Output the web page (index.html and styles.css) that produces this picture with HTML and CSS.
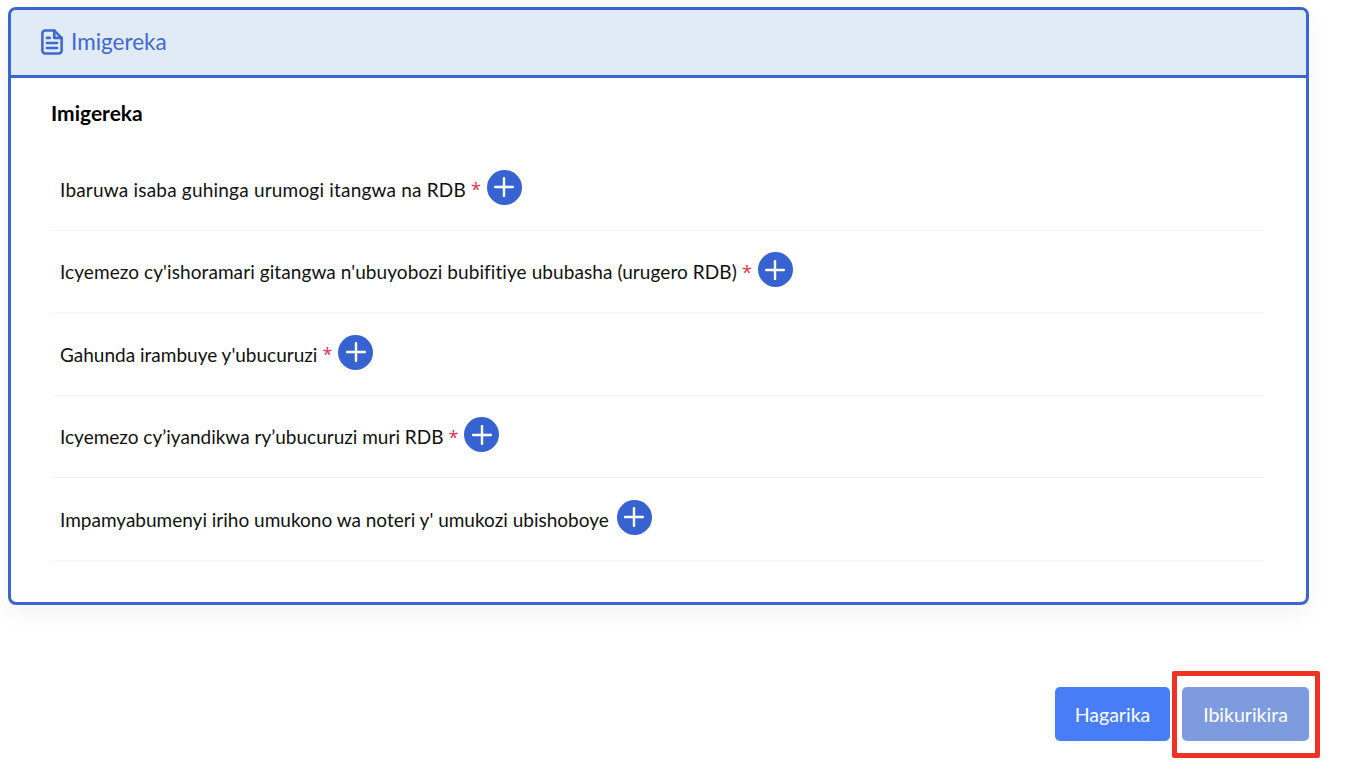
FILE: index.html
```html
<!DOCTYPE html>
<html lang="en">

<head>
  <meta charset="UTF-8">
  <meta name="viewport" content="width=device-width, initial-scale=1.0">
  <title>Imigereka</title>
  <link rel="stylesheet" href="styles.css">
</head>

<body>
  <section class="card">
    <div class="card-header">
      <svg class="doc-icon" viewBox="0 0 24 28" width="22" height="26" fill="none" stroke="currentColor" stroke-width="2.8" stroke-linecap="round" stroke-linejoin="round">
        <path d="M4.5 1.5h10l8 8v14a3 3 0 0 1-3 3h-15a3 3 0 0 1-3-3v-19a3 3 0 0 1 3-3z" />
        <path d="M14.5 1.5v8h8" />
        <path d="M6.5 9.5h3M6.5 15h11M6.5 20.500h11" />
      </svg>
      <span>Imigereka</span>
    </div>

    <div class="card-body">
      <h3>Imigereka</h3>
      <ul class="doc-list">
        <li>
          <span class="spaced">Ibaruwa isaba guhinga urumogi itangwa na RDB</span>
          <span class="required">*</span>
          <button class="add-btn" aria-label="Add"><svg viewBox="0 0 20 20" width="20" height="20"><path d="M10 1v18M1 10h18" /></svg></button>
        </li>
        <li>
          <span class="spaced-sm">Icyemezo cy'ishoramari gitangwa n'ubuyobozi bubifitiye ububasha (urugero RDB)</span>
          <span class="required">*</span>
          <button class="add-btn" aria-label="Add"><svg viewBox="0 0 20 20" width="20" height="20"><path d="M10 1v18M1 10h18" /></svg></button>
        </li>
        <li>
          <span>Gahunda irambuye y'ubucuruzi</span>
          <span class="required">*</span>
          <button class="add-btn" aria-label="Add"><svg viewBox="0 0 20 20" width="20" height="20"><path d="M10 1v18M1 10h18" /></svg></button>
        </li>
        <li>
          <span>Icyemezo cy’iyandikwa ry’ubucuruzi muri RDB</span>
          <span class="required">*</span>
          <button class="add-btn" aria-label="Add"><svg viewBox="0 0 20 20" width="20" height="20"><path d="M10 1v18M1 10h18" /></svg></button>
        </li>
        <li>
          <span>Impamyabumenyi iriho umukono wa noteri y' umukozi ubishoboye</span>
          <button class="add-btn" aria-label="Add"><svg viewBox="0 0 20 20" width="20" height="20"><path d="M10 1v18M1 10h18" /></svg></button>
        </li>
      </ul>
    </div>
  </section>

  <div class="actions">
    <button class="btn btn-cancel">Hagarika</button>
    <div class="next-wrap">
      <button class="btn btn-next">Ibikurikira</button>
      <div class="highlight"></div>
    </div>
  </div>
</body>

</html>
```

FILE: styles.css
```css
* {
  margin: 0;
  padding: 0;
  box-sizing: border-box;
  font-family: Lato, "Open Sans", Arial, sans-serif;
}

body {
  background-color: #fff;
  min-height: 100vh;
  padding: 7px 39px 0 8px;
  color: #111;
}

/* Card */
.card {
  height: 598px;
  border: 3px solid #3a66cf;
  border-radius: 8px;
  box-shadow: 0 8px 24px rgba(0, 0, 0, 0.05);
  overflow: hidden;
}

.card-header {
  height: 68px;
  display: flex;
  align-items: center;
  gap: 8px;
  padding: 0 0 2px 30px;
  background: #e1ebf8;
  border-bottom: 3px solid #3a66cf;
  color: #3f69cf;
  font-size: 22.5px;
}

.card-body {
  padding: 23px 42px 0 40px;
}

.card-body h3 {
  font-size: 21px;
  font-weight: 700;
  color: #000;
  line-height: 24px;
  margin-bottom: 23px;
}

/* Document rows */
.doc-list {
  list-style: none;
}

.doc-list li {
  height: 82.5px;
  display: flex;
  align-items: center;
  padding: 1px 9px 0;
  font-size: 19px;
  border-bottom: 1px solid #f3f3f3;
}

.spaced {
  letter-spacing: 0.2px;
}

.spaced-sm {
  letter-spacing: 0.08px;
}

.required {
  color: #e8304f;
  font-family: "Open Sans", sans-serif;
  font-size: 18px;
  margin: 0 -2px 0 5px;
}

.add-btn {
  width: 35px;
  height: 35px;
  margin-left: 8px;
  margin-top: -4px;
  border: none;
  border-radius: 50%;
  background: #3763d2;
  display: flex;
  align-items: center;
  justify-content: center;
}

.add-btn path {
  stroke: #fff;
  stroke-width: 2.4;
  stroke-linecap: round;
  fill: none;
}

/* Footer buttons */
.actions {
  display: flex;
  justify-content: flex-end;
  gap: 12px;
  margin-top: 82px;
}

.btn {
  height: 54px;
  border: none;
  border-radius: 5px;
  color: #fff;
  font-size: 19.5px;
}

.btn-cancel {
  width: 115px;
  background: #477ef8;
}

.btn-next {
  width: 127px;
  background: #7e9bdf;
}

.next-wrap {
  position: relative;
}

.highlight {
  position: absolute;
  left: -10px;
  top: -16px;
  width: 148px;
  height: 87px;
  border: 5px solid #ee3224;
  border-radius: 2px;
}
```
